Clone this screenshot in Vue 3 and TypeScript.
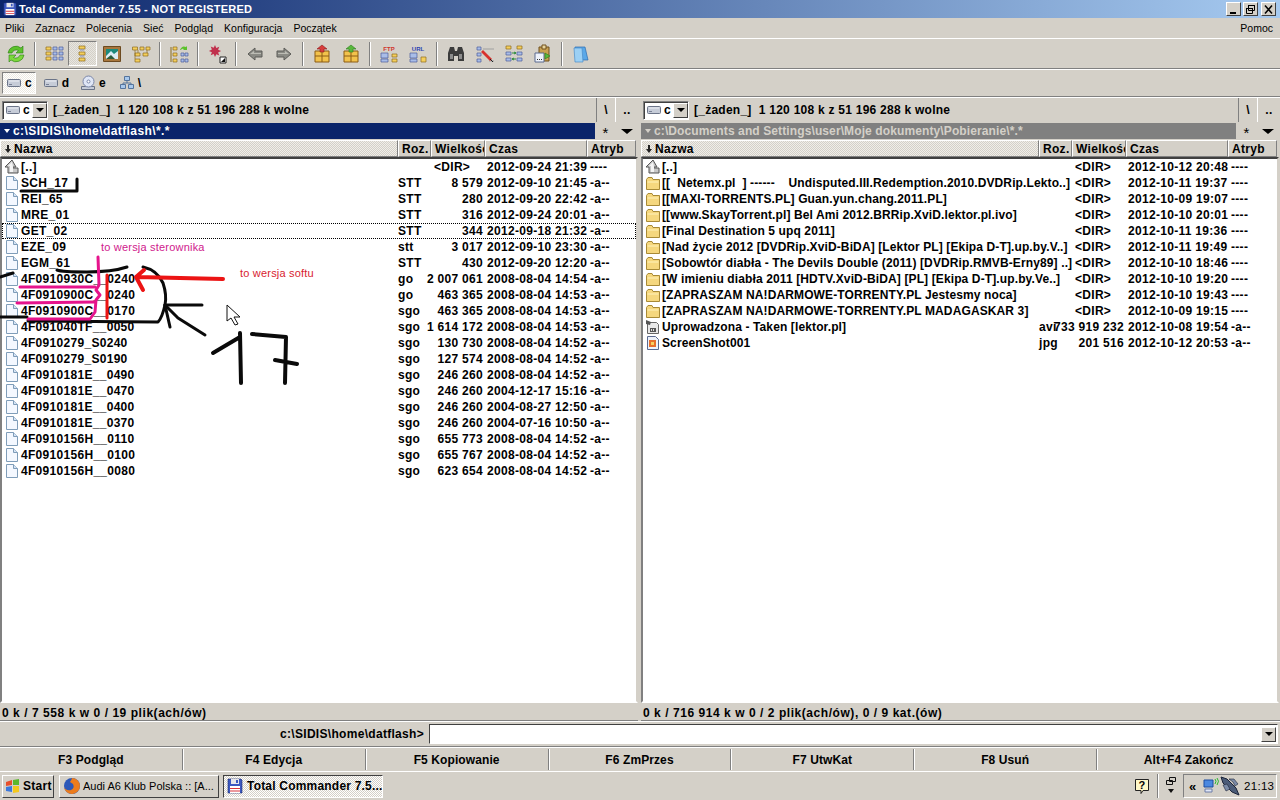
<template>
  <div class="app">
    <svg class="defs" width="0" height="0">
      <defs>
        <symbol id="i-file" viewBox="0 0 16 16">
          <path d="M2.500 1.500h7l4 4v9h-11z" fill="#f4f8ff" stroke="#7f9db9" />
          <path d="M9.500 1.500v4h4" fill="#d6e4f5" stroke="#7f9db9" />
        </symbol>
        <symbol id="i-up" viewBox="0 0 16 16">
          <path d="M8 1 1 8h3v6h10V9H9v-1h3z" fill="#c8c8c8" stroke="#555" />
          <path d="M8 3 4 7h2v6h3V8" fill="#f4f4f4" />
        </symbol>
        <symbol id="i-folder" viewBox="0 0 16 16">
          <path d="M1.500 4.500 3 2.500h4l1 2h6.500v10h-13z" fill="#f5d77e" stroke="#a88a36" />
          <path d="M2.500 6.500h11v1h-11z" fill="#fff2bd" />
        </symbol>
        <symbol id="i-video" viewBox="0 0 16 16">
          <path d="M2.500 3.500h9l2 2v9h-11z" fill="#e8e8e8" stroke="#666" />
          <path d="M1 1l5 2-1 3-4-1zM5 9h6v4H5z" fill="#555" />
          <path d="M6 10h1v2H6zM8 10h1v2H8z" fill="#ddd" />
        </symbol>
        <symbol id="i-image" viewBox="0 0 16 16">
          <path d="M2.500 1.500h8l3 3v10h-11z" fill="#eef2fa" stroke="#5a6a90" />
          <path d="M4 5h7v7H4z" fill="#e8702a" />
          <path d="M6 7h3v3H6z" fill="#f8d060" />
        </symbol>
        <symbol id="i-drive" viewBox="0 0 16 16">
          <path d="M1.500 5.500q0-1 1-1h11q1 0 1 1v5q0 1-1 1h-11q-1 0-1-1z" fill="#c6ccd8" stroke="#6b7488" />
          <path d="M3 9h3v1H3z" fill="#7a8296" />
          <path d="M3 5.500h10v1H3z" fill="#eef0f6" />
        </symbol>
        <symbol id="i-cd" viewBox="0 0 16 16">
          <path d="M1.500 11.500h13v3h-13z" fill="#c6ccd8" stroke="#6b7488" />
          <circle cx="8.500" cy="6.500" r="5.500" fill="#dfe6f6" stroke="#7a86a8" />
          <circle cx="8.500" cy="6.500" r="1.500" fill="#fff" stroke="#7a86a8" />
        </symbol>
        <symbol id="i-net" viewBox="0 0 16 16">
          <path d="M5.500 1.500h5v4h-5zM1.500 9.500h5v4h-5zM9.500 9.500h5v4h-5z" fill="#a8c8ec" stroke="#55749c" />
          <path d="M8 6v2M4 9V8h8v1" fill="none" stroke="#55749c" />
        </symbol>
        <symbol id="i-refresh" viewBox="0 0 20 20">
          <path d="M2 9a8 8 0 0 1 13-5l2-2v7h-7l2.500-2.500A4.500 4.500 0 0 0 6 9z" fill="#5cc22c" stroke="#2a7c14" stroke-width=".6" />
          <path d="M18 11a8 8 0 0 1-13 5l-2 2v-7h7l-2.500 2.500A4.500 4.500 0 0 0 14 11z" fill="#7cd83c" stroke="#2a7c14" stroke-width=".6" />
        </symbol>
        <symbol id="i-brief" viewBox="0 0 20 20">
          <path d="M2 3h5v3H2zM2 8h5v3H2zM2 13h5v3H2z" fill="#f5cf5c" stroke="#8c6c1c" stroke-width=".7" />
          <path d="M9 3h4v3H9zM9 8h4v3H9zM9 13h4v3H9zM15 3h4v3h-4zM15 8h4v3h-4zM15 13h4v3h-4z" fill="#a9bde8" stroke="#4a5c9c" stroke-width=".7" />
        </symbol>
        <symbol id="i-full" viewBox="0 0 20 20">
          <path d="M6 2h6v3H6zM6 8h6v3H6zM6 14h6v3H6z" fill="#f5cf5c" stroke="#8c6c1c" stroke-width=".7" />
          <path d="M7 5.500h4v1H7zM7 11.500h4v1H7z" fill="#8890b8" />
        </symbol>
        <symbol id="i-thumb" viewBox="0 0 20 20">
          <path d="M1.500 2.500h17v15h-17z" fill="#a8763c" stroke="#6c4a20" />
          <path d="M4 5h12v10H4z" fill="#1c8a7c" />
          <path d="M4 12 9 7l3 3 4-3v8H4z" fill="#dcecf4" />
          <path d="M4 15l5-4 4 4z" fill="#2c5c3c" />
        </symbol>
        <symbol id="i-tree" viewBox="0 0 20 20">
          <path d="M1.500 3h5v3h-5zM9 3h4v3H9zM15 3h4v3h-4zM4 9h5v3H4zM12 9h5v3h-5zM4 15h5v3H4z" fill="#f5cf5c" stroke="#8c6c1c" stroke-width=".7" />
          <path d="M4 6v9M7 6v3M16 6v3" stroke="#8c6c1c" fill="none" stroke-width=".7" />
        </symbol>
        <symbol id="i-sync" viewBox="0 0 20 20">
          <path d="M2 3v15" stroke="#8c6c1c" />
          <path d="M4 3h4v3H4zM4 9h4v3H4zM4 15h4v3H4z" fill="#f5cf5c" stroke="#8c6c1c" stroke-width=".7" />
          <path d="M12 9h3v3h-3zM16 9h3v3h-3zM12 15h3v3h-3zM16 15h3v3h-3z" fill="#a9bde8" stroke="#4a5c9c" stroke-width=".7" />
          <path d="M11 6q2-5 6-3l1-1v4h-4l1-1q-2-1-3 1z" fill="#5cc22c" />
        </symbol>
        <symbol id="i-star" viewBox="0 0 20 20">
          <path d="M8 1l1.300 3 3-1.200-1.200 3 3 1.300-3 1.300 1.200 3-3-1.200L8 13l-1.300-3-3 1.200 1.200-3-3-1.300 3-1.300-1.200-3 3 1.200z" fill="#c0304c" />
          <path d="M13 13h6v6h-6z" fill="#fff" stroke="#222" />
          <path d="M14 18l4-4v4z" fill="#111" />
        </symbol>
        <symbol id="i-back" viewBox="0 0 20 20">
          <path d="M3 10 10 4v3h7v6h-7v3z" fill="#8a8a84" stroke="#5c5c58" />
          <path d="M5 10l4-3v2h7v1H8z" fill="#bcbcb4" />
        </symbol>
        <symbol id="i-fwd" viewBox="0 0 20 20">
          <path d="M17 10 10 4v3H3v6h7v3z" fill="#8a8a84" stroke="#5c5c58" />
          <path d="M4 9h7V7l4 3H4z" fill="#bcbcb4" />
        </symbol>
        <symbol id="i-pack" viewBox="0 0 20 20">
          <path d="M3 7h14v11H3z" fill="#f2c24c" stroke="#8c5c14" />
          <path d="M10 7v11M3 12h14" stroke="#8c5c14" />
          <path d="M10 1l5 4h-3v3H8V5H5z" fill="#d83c3c" stroke="#8c1c1c" stroke-width=".6" />
        </symbol>
        <symbol id="i-unpack" viewBox="0 0 20 20">
          <path d="M3 7h14v11H3z" fill="#f2c24c" stroke="#8c5c14" />
          <path d="M10 7v11M3 12h14" stroke="#8c5c14" />
          <path d="M10 1l5 4h-3v3H8V5H5z" fill="#58b83c" stroke="#2c7c1c" stroke-width=".6" />
        </symbol>
        <symbol id="i-ftp" viewBox="0 0 20 20">
          <text x="10" y="7" text-anchor="middle" class="mini" fill="#d0342c">FTP</text>
          <path d="M2 9h7v5H2zM2 15h7v3H2z" fill="#a9bde8" stroke="#4a5c9c" stroke-width=".7" />
          <path d="M13 10h5v3h-5zM13 15h5v3h-5z" fill="#f5cf5c" stroke="#8c6c1c" stroke-width=".7" />
        </symbol>
        <symbol id="i-url" viewBox="0 0 20 20">
          <text x="10" y="7" text-anchor="middle" class="mini" fill="#2c44b0">URL</text>
          <path d="M2 9h7v5H2zM2 15h7v3H2z" fill="#a9bde8" stroke="#4a5c9c" stroke-width=".7" />
          <path d="M13 13h5v5h-5z" fill="#f5cf5c" stroke="#8c6c1c" stroke-width=".7" />
        </symbol>
        <symbol id="i-find" viewBox="0 0 20 20">
          <path d="M2 9l2-6h4l1 4h2l1-4h4l2 6v8h-6v-5H8v5H2z" fill="#3c3c3c" />
          <path d="M4 10h3v5H4zM13 10h3v5h-3z" fill="#8c8c8c" />
        </symbol>
        <symbol id="i-rename" viewBox="0 0 20 20">
          <path d="M2 3h4v3H2zM2 9h4v3H2zM2 15h4v3H2z" fill="#a9bde8" stroke="#4a5c9c" stroke-width=".7" />
          <path d="M8 5h11M14 17h5" stroke="#a0a0a0" />
          <path d="M8 6l9 9-2 2-9-9z" fill="#d8302c" />
          <path d="M15 15l2 2 1 1z" stroke="#222" />
        </symbol>
        <symbol id="i-compare" viewBox="0 0 20 20">
          <path d="M2 2h5v3H2zM13 2h5v3h-5z" fill="#f5cf5c" stroke="#8c6c1c" stroke-width=".7" />
          <path d="M2 8h5v3H2zM13 8h5v3h-5zM2 14h5v3H2zM13 14h5v3h-5z" fill="#a9bde8" stroke="#4a5c9c" stroke-width=".7" />
          <path d="M8 9h4M10 8l2 1-2 1M8 15h4M10 14l-2 1 2 1" stroke="#2c8c3c" fill="none" />
        </symbol>
        <symbol id="i-clip" viewBox="0 0 20 20">
          <path d="M6 3h10v14H6z" fill="#c8a050" stroke="#70501c" />
          <path d="M9 1h4v4H9z" fill="#e8d49c" stroke="#70501c" />
          <path d="M2 9h9v9H2z" fill="#eef2fa" stroke="#5a6a90" />
          <path d="M4 15h1v1H4zM6 15h1v1H6zM8 15h1v1H8z" fill="#333" />
          <path d="M12 9l5 3-5 3z" fill="#58b83c" stroke="#2c7c1c" stroke-width=".6" />
        </symbol>
        <symbol id="i-note" viewBox="0 0 20 20">
          <path d="M4 3h10l3 13H6z" fill="#5aa8e8" stroke="#2c6cb0" stroke-width=".7" />
          <path d="M3 4h8l1 14H4z" fill="#9cd0f4" stroke="#4a8cc8" stroke-width=".7" />
        </symbol>
        <symbol id="i-floppy" viewBox="0 0 16 16">
          <path d="M1 1h13l1 1v13H1z" fill="#3c58c0" stroke="#1c2c70" stroke-width=".6" />
          <path d="M4 1h8v5H4z" fill="#e6e6ea" />
          <path d="M9 2h2v3H9z" fill="#3c58c0" />
          <path d="M3 8h10v7H3z" fill="#fff" />
          <path d="M3 10h10v1H3zM3 12.500h10v1H3z" fill="#d8343c" />
        </symbol>
      </defs>
    </svg>

    <div class="title">
      <svg class="title-icon"><use href="#i-floppy" /></svg>
      <span class="title-text">Total Commander 7.55 - NOT REGISTERED</span>
      <div class="win-btns">
        <span class="win-btn">
          <svg width="13" height="11"><path d="M3 8h6v2H3z" fill="#000" /></svg>
        </span>
        <span class="win-btn">
          <svg width="13" height="11"><path d="M4.500 1.500h6v5h-6zM2.500 4.500h6v5h-6z" fill="#d4d0c8" stroke="#000" /><path d="M4 1h7v1H4zM2 4h7v1H2z" /></svg>
        </span>
        <span class="win-btn close">
          <svg width="13" height="11"><path d="M3 1.500 10 9.500M10 1.500 3 9.500" stroke="#000" stroke-width="1.500" /></svg>
        </span>
      </div>
    </div>

    <div class="menu">
      <span v-for="m in menuItems" :key="m">{{ m }}</span>
      <span class="menu-help">Pomoc</span>
    </div>

    <div class="toolbar">
      <template v-for="(t, i) in toolItems" :key="i">
        <span v-if="t === '|'" class="tool-sep"></span>
        <span v-else class="tool" :class="{ pressed: t === 'full' }">
          <svg width="20" height="20"><use :href="'#i-' + t" /></svg>
        </span>
      </template>
    </div>

    <div class="drivebar">
      <span v-for="d in drives" :key="d.label" class="drive" :class="{ active: d.label === 'c' }">
        <svg width="16" height="16"><use :href="'#i-' + d.icon" /></svg>
        <b>{{ d.label }}</b>
      </span>
    </div>

    <div class="panels">
      <section v-for="(p, idx) in panels" :key="idx" class="panel">
        <div class="drive-row">
          <span class="combo">
            <svg width="16" height="16"><use href="#i-drive" /></svg>
            <b>c</b>
            <span class="combo-arrow"><i class="tri"></i></span>
          </span>
          <span class="free">{{ freeText }}</span>
          <span class="mini-btn slash">\</span>
          <span class="mini-btn dots">..</span>
        </div>
        <div class="path-row">
          <div class="path" :class="{ inactive: !p.active }">
            <i class="tri small"></i>
            <span>{{ p.path }}</span>
          </div>
          <span class="mini-btn star">*</span>
          <span class="mini-btn arrow"><i class="tri big"></i></span>
        </div>
        <div class="head">
          <span class="h-name">
            <svg width="8" height="10"><path d="M3 1h2v4h2L4 9 1 5h2z" fill="#222" /></svg>
            Nazwa
          </span>
          <span class="h-ext">Roz.</span>
          <span class="h-size">Wielkość</span>
          <span class="h-date">Czas</span>
          <span class="h-attr">Atryb</span>
        </div>
        <div class="list">
          <div
            v-for="r in p.rows"
            :key="r.name"
            class="row"
            :class="{ focus: r.name === 'GET_02' }"
          >
            <svg class="r-icon" width="16" height="16"><use :href="'#i-' + r.icon" /></svg>
            <span class="r-name">{{ r.name }}</span>
            <span class="r-ext">{{ r.ext }}</span>
            <span class="r-size" :class="{ dir: r.size === '<DIR>' }">{{ r.size }}</span>
            <span class="r-date">{{ r.date }}</span>
            <span class="r-attr">{{ r.attr }}</span>
          </div>
        </div>
        <div class="status">{{ p.status }}</div>
      </section>
    </div>

    <div class="command">
      <span class="cmd-label">c:\SIDIS\home\datflash&gt;</span>
      <div class="cmd-input">
        <span class="combo-arrow"><i class="tri"></i></span>
      </div>
    </div>

    <div class="fkeys">
      <span v-for="f in fkeys" :key="f" class="fkey">{{ f }}</span>
    </div>

    <div class="taskbar">
      <span class="start">
        <svg width="16" height="16" viewBox="0 0 16 16">
          <path d="M1 4l6-2v5l-6 1z" fill="#e8502c" />
          <path d="M8 2l6-1v6l-6 0z" fill="#5cb82c" />
          <path d="M1 9l6-1v6l-6-1z" fill="#3c78dc" />
          <path d="M8 8h6v6l-6 1z" fill="#f4c81c" />
        </svg>
        Start
      </span>
      <span class="task">
        <svg width="18" height="18" viewBox="0 0 18 18">
          <circle cx="9" cy="9" r="8" fill="#2c58b8" />
          <path d="M9 1a8 8 0 1 1-8 9q2 4 7 3 4-2 2-6L7 5q2-3 2-4z" fill="#ec7c1c" />
        </svg>
        <span>Audi A6 Klub Polska :: [A...</span>
      </span>
      <span class="task current">
        <svg width="16" height="16"><use href="#i-floppy" /></svg>
        <span>Total Commander 7.5...</span>
      </span>
      <span class="tb-spacer"></span>
      <svg class="help" width="16" height="16" viewBox="0 0 16 16">
        <path d="M1.500 1.500h13v11H9l-2 3v-3H1.500z" fill="#fff8c8" stroke="#222" />
        <text x="8" y="11" text-anchor="middle" class="help-q">?</text>
      </svg>
      <span class="tb-div"></span>
      <svg class="desk" width="12" height="20" viewBox="0 0 12 20">
        <path d="M4.500 1.500h6v4h-6zM1.500 4.500h6v4h-6z" fill="#d4d0c8" stroke="#111" />
        <path d="M3 13h6l-3 4z" fill="#111" />
      </svg>
      <div class="tray">
        <span class="chev">«</span>
        <svg width="18" height="18" viewBox="0 0 18 18">
          <path d="M2 3h9v7H2z" fill="#4a88e0" stroke="#1c4ca0" />
          <path d="M3 12h7v3H3z" fill="#dfe6f6" stroke="#6c7ca8" />
          <path d="M13 2q2 2 0 5M15 1q3 3 0 7" fill="none" stroke="#2cb82c" />
        </svg>
        <svg width="20" height="20" viewBox="0 0 20 20">
          <path d="M1 1l6 2 9 9 3 7-7-3-9-9z" fill="#4c5c78" stroke="#1c2438" />
          <path d="M3 9l4-1 3 5-4 2zM9 3l4 3 2 4 3-2-4-5z" fill="#7c8ca8" stroke="#1c2438" stroke-width=".6" />
        </svg>
        <span class="clock">21:13</span>
      </div>
    </div>

    <!-- marker scribbles the user painted over the screenshot -->
    <svg class="scribble" width="1280" height="800" viewBox="0 0 1280 800">
      <g fill="none" stroke="#0a0a0a" stroke-width="3" stroke-linecap="round" stroke-linejoin="round">
        <path d="M21 191 77 191 77 179" />
        <path d="M0 277 13 273" />
        <path d="M57 270Q62 272 87 272 112 272 127 267" />
        <path d="M143 267Q157 270 163 283 167 295 165 305 162 318 158 322L28 321" />
        <path d="M0 317H27" />
        <path d="M165 305H202" />
        <path d="M165 305 170 327" />
        <path d="M165 305 178 318 205 335" />
        <path d="M213 353 240 337M240 333 241 383" stroke-width="4" />
        <path d="M252 334 286 337 285 383M275 360 297 364" stroke-width="4" />
      </g>
      <g fill="none" stroke="#e6148c" stroke-width="3" stroke-linecap="round" stroke-linejoin="round">
        <path d="M98 257 99 285 96 290 100 295 96 300 95 312 90 319H28" />
        <path d="M20 287H95" />
        <path d="M17 303 95 302" />
      </g>
      <g fill="none" stroke="#ec1414" stroke-linecap="round" stroke-linejoin="round">
        <path d="M107 275V318" stroke-width="3" />
        <path d="M223 279 137 277M144 270 136 277 143 290" stroke-width="4" />
      </g>
      <path d="M227 305V321L231 318 235 325 238 324 234 317H240z" fill="#fff" stroke="#111" />
    </svg>
    <span class="note driver">to wersja sterownika</span>
    <span class="note soft">to wersja softu</span>
  </div>
</template>

<script setup lang="ts">
interface FileRow {
  name: string
  icon: string
  ext: string
  size: string
  date: string
  attr: string
}

const menuItems = ["Pliki", "Zaznacz", "Polecenia", "Sieć", "Podgląd", "Konfiguracja", "Początek"]

const toolItems = [
  "refresh", "|", "brief", "full", "thumb", "tree", "|", "sync", "|", "star", "|", "back", "fwd", "|",
  "pack", "unpack", "|", "ftp", "url", "|", "find", "rename", "compare", "clip", "|", "note",
]

const drives = [
  { label: "c", icon: "drive" },
  { label: "d", icon: "drive" },
  { label: "e", icon: "cd" },
  { label: "\\", icon: "net" },
]

const freeText = "[_żaden_]  1 120 108 k z 51 196 288 k wolne"

const fkeys = ["F3 Podgląd", "F4 Edycja", "F5 Kopiowanie", "F6 ZmPrzes", "F7 UtwKat", "F8 Usuń", "Alt+F4 Zakończ"]

function file(name: string, ext: string, size: string, date: string, icon = "file"): FileRow {
  return { name, icon, ext, size, date, attr: "-a--" }
}

function dir(name: string, date: string, icon = "folder"): FileRow {
  return { name, icon, ext: "", size: "<DIR>", date, attr: "----" }
}

const leftRows: FileRow[] = [
  dir("[..]", "2012-09-24 21:39", "up"),
  file("SCH_17", "STT", "8 579", "2012-09-10 21:45"),
  file("REI_65", "STT", "280", "2012-09-20 22:42"),
  file("MRE_01", "STT", "316", "2012-09-24 20:01"),
  file("GET_02", "STT", "344", "2012-09-18 21:32"),
  file("EZE_09", "stt", "3 017", "2012-09-10 23:30"),
  file("EGM_61", "STT", "430", "2012-09-20 12:20"),
  file("4F0910930C__0240", "go", "2 007 061", "2008-08-04 14:54"),
  file("4F0910900C__0240", "go", "463 365", "2008-08-04 14:53"),
  file("4F0910900C__0170", "sgo", "463 365", "2008-08-04 14:53"),
  file("4F091040TF__0050", "sgo", "1 614 172", "2008-08-04 14:53"),
  file("4F0910279_S0240", "sgo", "130 730", "2008-08-04 14:52"),
  file("4F0910279_S0190", "sgo", "127 574", "2008-08-04 14:52"),
  file("4F0910181E__0490", "sgo", "246 260", "2008-08-04 14:52"),
  file("4F0910181E__0470", "sgo", "246 260", "2004-12-17 15:16"),
  file("4F0910181E__0400", "sgo", "246 260", "2004-08-27 12:50"),
  file("4F0910181E__0370", "sgo", "246 260", "2004-07-16 10:50"),
  file("4F0910156H__0110", "sgo", "655 773", "2008-08-04 14:52"),
  file("4F0910156H__0100", "sgo", "655 767", "2008-08-04 14:52"),
  file("4F0910156H__0080", "sgo", "623 654", "2008-08-04 14:52"),
]

const rightRows: FileRow[] = [
  dir("[..]", "2012-10-12 20:48", "up"),
  dir("[[  Netemx.pl  ] ------    Undisputed.III.Redemption.2010.DVDRip.Lekto..]", "2012-10-11 19:37"),
  dir("[[MAXI-TORRENTS.PL] Guan.yun.chang.2011.PL]", "2012-10-09 19:07"),
  dir("[[www.SkayTorrent.pl] Bel Ami 2012.BRRip.XviD.lektor.pl.ivo]", "2012-10-10 20:01"),
  dir("[Final Destination 5 upq 2011]", "2012-10-11 19:36"),
  dir("[Nad życie 2012 [DVDRip.XviD-BiDA] [Lektor PL] [Ekipa D-T].up.by.V..]", "2012-10-11 19:49"),
  dir("[Sobowtór diabła - The Devils Double (2011) [DVDRip.RMVB-Erny89] ..]", "2012-10-10 18:46"),
  dir("[W imieniu diabła 2011 [HDTV.XviD-BiDA] [PL] [Ekipa D-T].up.by.Ve..]", "2012-10-10 19:20"),
  dir("[ZAPRASZAM NA!DARMOWE-TORRENTY.PL Jestesmy noca]", "2012-10-10 19:43"),
  dir("[ZAPRASZAM NA!DARMOWE-TORRENTY.PL MADAGASKAR 3]", "2012-10-09 19:15"),
  file("Uprowadzona - Taken [lektor.pl]", "avi", "733 919 232", "2012-10-08 19:54", "video"),
  file("ScreenShot001", "jpg", "201 516", "2012-10-12 20:53", "image"),
]

const panels = [
  {
    active: true,
    path: "c:\\SIDIS\\home\\datflash\\*.*",
    rows: leftRows,
    status: "0 k / 7 558 k w 0 / 19 plik(ach/ów)",
  },
  {
    active: false,
    path: "c:\\Documents and Settings\\user\\Moje dokumenty\\Pobieranie\\*.*",
    rows: rightRows,
    status: "0 k / 716 914 k w 0 / 2 plik(ach/ów), 0 / 9 kat.(ów)",
  },
]
</script>

<style>
html,
body {
  margin: 0;
  background: #d4d0c8;
}
</style>

<style scoped>
.app {
  position: relative;
  width: 1280px;
  height: 800px;
  display: flex;
  flex-direction: column;
  overflow: hidden;
  background: #d4d0c8;
  color: #000;
  font: bold 12px "Liberation Sans", Arial, sans-serif;
  letter-spacing: 0.3px;
}

.defs {
  position: absolute;
}

.mini {
  font: bold 6px "Liberation Sans", sans-serif;
  letter-spacing: 0;
}

.title {
  height: 18px;
  flex: none;
  display: flex;
  align-items: center;
  padding-left: 3px;
  box-sizing: border-box;
  background: linear-gradient(90deg, #0a246a, #a6caf0);
  color: #fff;
}

.title-icon {
  width: 14px;
  height: 14px;
}

.title-text {
  margin-left: 2px;
  font-size: 11px;
  letter-spacing: 0.23px;
}

.win-btns {
  margin-left: auto;
  display: flex;
  gap: 2px;
  padding-right: 4px;
}

.win-btn {
  width: 15px;
  height: 14px;
  display: flex;
  align-items: center;
  justify-content: center;
  box-sizing: border-box;
  background: #d4d0c8;
  border: 1px solid;
  border-color: #fff #404040 #404040 #fff;
}

.win-btn.close {
  margin-left: 1px;
}

.menu {
  height: 20px;
  flex: none;
  display: flex;
  align-items: center;
  gap: 11px;
  padding: 0 7px 0 5px;
  box-sizing: border-box;
  font-weight: normal;
  font-size: 10.5px;
  letter-spacing: 0;
}

.menu-help {
  margin-left: auto;
}

.toolbar {
  height: 31px;
  flex: none;
  display: flex;
  align-items: center;
  padding-left: 1px;
  box-sizing: border-box;
  border-top: 1px solid #fff;
  border-bottom: 1px solid #808080;
}

.tool {
  width: 29px;
  height: 25px;
  display: flex;
  align-items: center;
  justify-content: center;
  box-sizing: border-box;
}

.tool.pressed {
  border: 1px solid;
  border-color: #808080 #fff #fff #808080;
  background: repeating-conic-gradient(#d4d0c8 0 25%, #e8e6e0 0 50%) 0 0 / 2px 2px;
}

.tool-sep {
  width: 2px;
  height: 24px;
  margin: 0 3.500px 0 3.500px;
  border-left: 1px solid #808080;
  border-right: 1px solid #fff;
  box-sizing: border-box;
}

.drivebar {
  height: 28px;
  flex: none;
  display: flex;
  align-items: center;
  gap: 3px;
  padding-left: 2px;
  box-sizing: border-box;
  border-top: 1px solid #fff;
  border-bottom: 1px solid #808080;
  font-size: 12px;
}

.drive {
  width: 34px;
  height: 22px;
  display: flex;
  align-items: center;
  justify-content: center;
  gap: 3px;
  box-sizing: border-box;
}

.drive.active {
  border: 1px solid;
  border-color: #808080 #fff #fff #808080;
  background: repeating-conic-gradient(#fff 0 25%, #ece9e2 0 50%) 0 0 / 2px 2px;
}

.panels {
  flex: 1;
  min-height: 0;
  display: flex;
  gap: 3px;
  border-top: 1px solid #fff;
}

.panel {
  width: 638px;
  flex: none;
  display: flex;
  flex-direction: column;
  min-width: 0;
}

.panel:last-child {
  width: 639px;
}

.panel:last-child .r-name {
  letter-spacing: 0.12px;
}

.drive-row {
  height: 24px;
  flex: none;
  display: flex;
  align-items: center;
  padding-left: 2px;
  box-sizing: border-box;
}

.combo {
  width: 46px;
  height: 19px;
  display: flex;
  align-items: center;
  gap: 2px;
  padding-left: 2px;
  box-sizing: border-box;
  background: #fff;
  border: 1px solid;
  border-color: #808080 #fff #fff #808080;
  box-shadow: inset 1px 1px 0 #404040;
}

.combo-arrow {
  width: 15px;
  height: 15px;
  margin-left: auto;
  display: flex;
  align-items: center;
  justify-content: center;
  box-sizing: border-box;
  background: #d4d0c8;
  border: 1px solid;
  border-color: #fff #404040 #404040 #fff;
}

.tri {
  width: 0;
  height: 0;
  border: 4px solid transparent;
  border-top: 4px solid #000;
  border-bottom: 0;
}

.tri.small {
  border-width: 4px 3px 0;
  border-top-color: inherit;
}

.tri.big {
  border-width: 5px 6px 0;
}

.free {
  margin-left: 5px;
  white-space: pre;
  font-size: 12px;
  letter-spacing: 0.25px;
}

.mini-btn {
  height: 100%;
  display: flex;
  align-items: center;
  justify-content: center;
  box-sizing: border-box;
  font-size: 12px;
}

.slash {
  margin-left: auto;
  width: 20px;
  border-left: 1px solid #808080;
  border-right: 1px solid #fff;
}

.dots {
  width: 22px;
}

.path-row {
  height: 16px;
  margin-top: 1px;
  flex: none;
  display: flex;
  align-items: stretch;
}

.path {
  width: 595px;
  display: flex;
  align-items: center;
  gap: 3px;
  padding-left: 4px;
  box-sizing: border-box;
  background: #0a246a;
  color: #fff;
  border-color: #fff;
  letter-spacing: 0.42px;
}

.path.inactive {
  background: #808080;
  color: #d4d0c8;
  border-color: #d4d0c8;
  letter-spacing: 0.11px;
}

.star {
  width: 21px;
  font-weight: normal;
  font-size: 15px;
  padding-top: 3px;
}

.arrow {
  width: 22px;
}

.head {
  height: 17px;
  margin-top: 1px;
  flex: none;
  display: flex;
  align-items: center;
  box-sizing: border-box;
}

.head span {
  height: 100%;
  display: flex;
  align-items: center;
  padding: 1px 0 0 3px;
  box-sizing: border-box;
  overflow: hidden;
  white-space: nowrap;
  border-top: 1px solid #fff;
  border-left: 1px solid #fff;
  border-right: 1px solid #808080;
  border-bottom: 1px solid #808080;
}

.head .h-name {
  width: 398px;
  gap: 2px;
  background: repeating-conic-gradient(#d4d0c8 0 25%, #f0eee9 0 50%) 0 0 / 2px 2px;
}

.h-ext {
  width: 33px;
}

.h-size {
  width: 54px;
}

.h-date {
  width: 102px;
}

.h-attr {
  width: 49px;
}

.list {
  flex: 1;
  min-height: 0;
  width: 638px;
  box-sizing: border-box;
  background: #fff;
  border: 2px solid;
  border-color: #404040 #d4d0c8 #fff #808080;
  overflow: hidden;
}

.row {
  height: 16px;
  display: flex;
  align-items: center;
  box-sizing: border-box;
  white-space: pre;
}

.row.focus {
  outline: 1px dotted #000;
  outline-offset: -1px;
}

.r-icon {
  margin-left: 2px;
  flex: none;
}

.r-name {
  width: 377px;
  margin-left: 1px;
  flex: none;
}

.r-ext {
  width: 33px;
  flex: none;
}

.r-size {
  width: 52px;
  flex: none;
  display: flex;
  justify-content: flex-end;
}

.r-size.dir {
  justify-content: flex-start;
  padding-left: 3px;
  box-sizing: border-box;
}

.r-date {
  width: 103px;
  margin-left: 4px;
  flex: none;
}

.r-attr {
  flex: none;
}

.status {
  height: 18px;
  flex: none;
  display: flex;
  align-items: center;
  padding: 2px 0 0 2px;
  box-sizing: border-box;
  font-size: 12px;
  letter-spacing: 0.55px;
  border-bottom: 1px solid #808080;
}

.command {
  height: 26px;
  flex: none;
  display: flex;
  align-items: center;
  padding-right: 2px;
  box-sizing: border-box;
  border-top: 1px solid #fff;
  border-bottom: 1px solid #808080;
}

.cmd-label {
  width: 424px;
  text-align: right;
  font-size: 12px;
}

.cmd-input {
  margin-left: 5px;
  flex: 1;
  height: 20px;
  display: flex;
  align-items: center;
  justify-content: flex-end;
  box-sizing: border-box;
  background: #fff;
  border: 1px solid;
  border-color: #404040 #fff #fff #404040;
  padding-right: 1px;
}

.fkeys {
  height: 25px;
  flex: none;
  display: grid;
  grid-template-columns: repeat(7, 1fr);
  border-top: 1px solid #fff;
  border-bottom: 1px solid #fff;
  box-sizing: border-box;
  letter-spacing: 0.1px;
}

.fkey {
  display: flex;
  align-items: center;
  justify-content: center;
  margin: 1px 0;
  border-right: 1px solid #808080;
  box-shadow: 1px 0 0 #fff;
}

.fkey:last-child {
  border-right: 0;
  box-shadow: none;
}

.taskbar {
  height: 28px;
  flex: none;
  display: flex;
  align-items: center;
  padding: 0 3px 0 2px;
  box-sizing: border-box;
}

.start {
  width: 52px;
  height: 23px;
  flex: none;
  display: flex;
  align-items: center;
  gap: 2px;
  padding-left: 2px;
  box-sizing: border-box;
  font-size: 12px;
  border: 1px solid;
  border-color: #fff #404040 #404040 #fff;
}

.task {
  width: 160px;
  height: 23px;
  margin-left: 5px;
  flex: none;
  display: flex;
  align-items: center;
  gap: 2px;
  padding-left: 3px;
  box-sizing: border-box;
  font-weight: normal;
  font-size: 11px;
  letter-spacing: 0;
  white-space: nowrap;
  border: 1px solid;
  border-color: #fff #404040 #404040 #fff;
}

.task svg {
  flex: none;
}

.task.current {
  margin-left: 4px;
  gap: 4px;
  font-size: 12px;
  font-weight: bold;
  letter-spacing: 0.2px;
  border-color: #404040 #fff #fff #404040;
  background: repeating-conic-gradient(#fff 0 25%, #d4d0c8 0 50%) 0 0 / 2px 2px;
}

.tb-spacer {
  flex: 1;
}

.help-q {
  font: bold 11px "Liberation Sans", sans-serif;
}

.tb-div {
  width: 2px;
  height: 24px;
  margin: 0 6px 0 7px;
  border-left: 1px solid #808080;
  border-right: 1px solid #fff;
  box-sizing: border-box;
}

.desk {
  margin-right: 6px;
}

.tray {
  width: 94px;
  height: 24px;
  flex: none;
  display: flex;
  align-items: center;
  padding-left: 5px;
  box-sizing: border-box;
  border: 1px solid;
  border-color: #808080 #fff #fff #808080;
  font-weight: normal;
}

.chev {
  width: 13px;
  font-weight: bold;
  font-size: 13px;
}

.clock {
  margin-left: 4px;
  font-size: 11.5px;
}

.scribble {
  position: absolute;
  left: 0;
  top: 0;
  pointer-events: none;
}

.note {
  position: absolute;
  font-weight: normal;
  font-size: 11px;
  letter-spacing: 0.2px;
  white-space: nowrap;
}

.driver {
  left: 101px;
  top: 241px;
  color: #d0208c;
}

.soft {
  left: 240px;
  top: 267px;
  color: #d81c30;
}
</style>
